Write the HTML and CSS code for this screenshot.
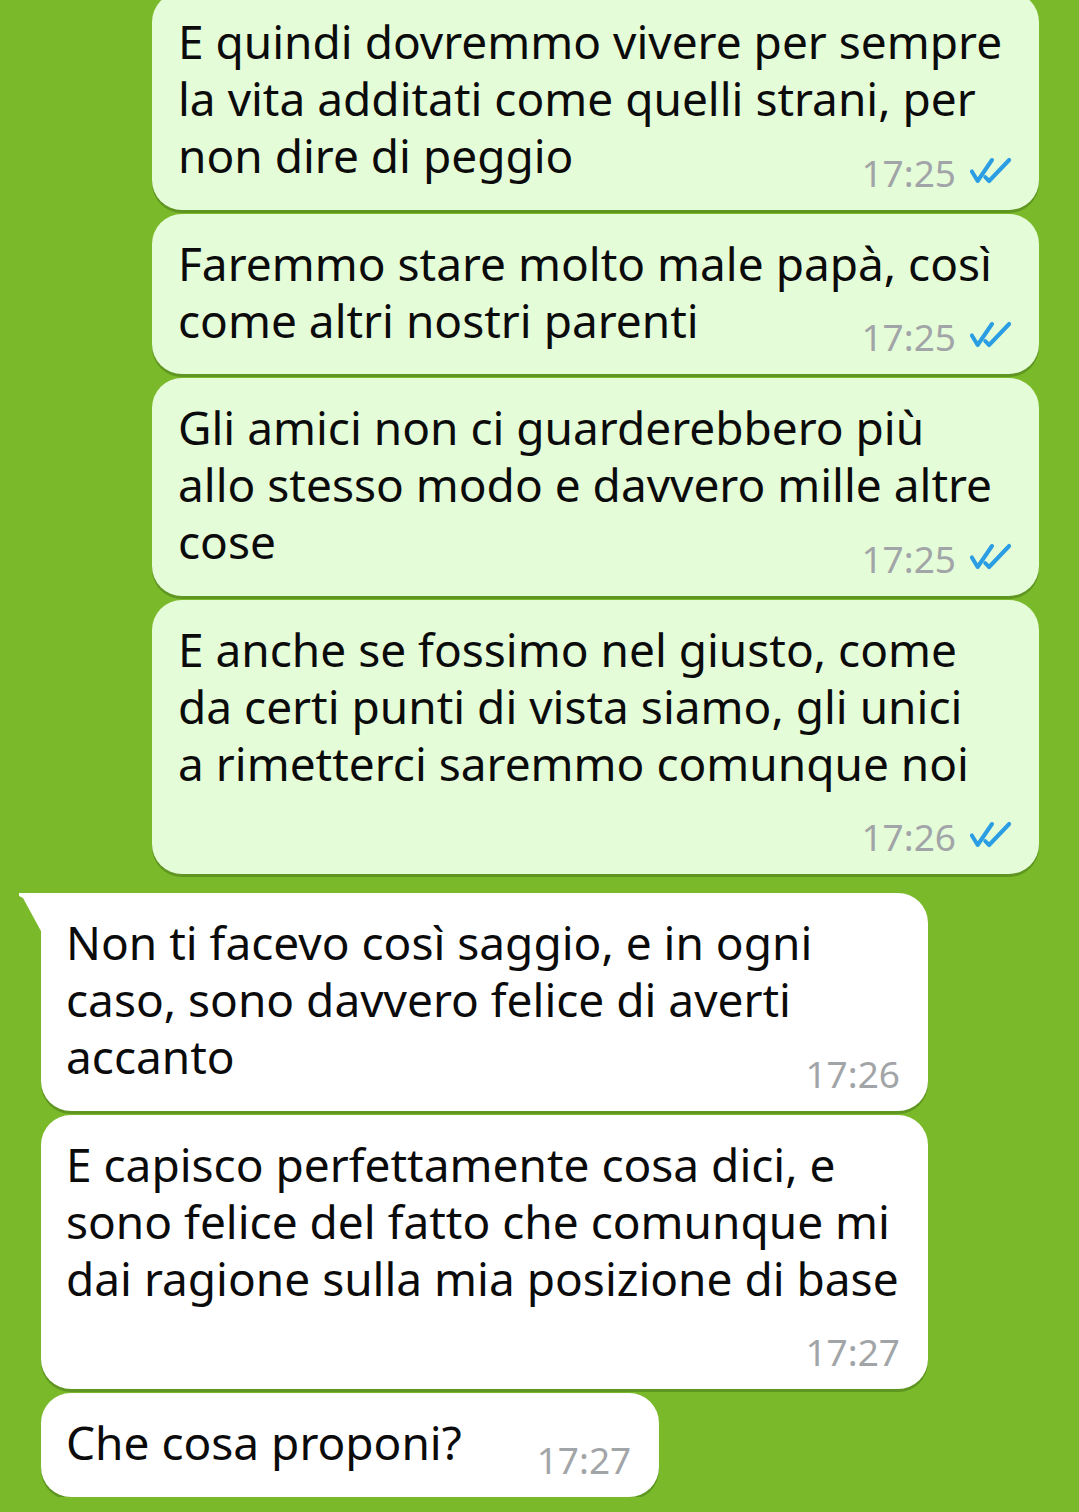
FILE: index.html
```html
<!DOCTYPE html>
<html lang="it">

<head>
  <meta charset="UTF-8">
  <meta name="viewport" content="width=device-width, initial-scale=1.0">
  <title>Chat</title>
  <link rel="stylesheet" href="styles.css">
</head>

<body>
  <div class="chat">

    <!-- Sent messages -->
    <div class="msg out first">
      <div class="text">E quindi dovremmo vivere per sempre<br>la vita additati come quelli strani, per<br>non dire di peggio</div>
      <div class="meta inline"><span class="time">17:25</span><svg class="ticks" viewBox="0 0 44 28"><path d="M2 15 L8 25 L23 3"/><path d="M16 21 L20 25 L41 3"/></svg></div>
    </div>

    <div class="msg out">
      <div class="text">Faremmo stare molto male papà, così<br>come altri nostri parenti</div>
      <div class="meta inline"><span class="time">17:25</span><svg class="ticks" viewBox="0 0 44 28"><path d="M2 15 L8 25 L23 3"/><path d="M16 21 L20 25 L41 3"/></svg></div>
    </div>

    <div class="msg out">
      <div class="text">Gli amici non ci guarderebbero più<br>allo stesso modo e davvero mille altre<br>cose</div>
      <div class="meta inline"><span class="time">17:25</span><svg class="ticks" viewBox="0 0 44 28"><path d="M2 15 L8 25 L23 3"/><path d="M16 21 L20 25 L41 3"/></svg></div>
    </div>

    <div class="msg out">
      <div class="text">E anche se fossimo nel giusto, come<br>da certi punti di vista siamo, gli unici<br>a rimetterci saremmo comunque noi</div>
      <div class="meta"><span class="time">17:26</span><svg class="ticks" viewBox="0 0 44 28"><path d="M2 15 L8 25 L23 3"/><path d="M16 21 L20 25 L41 3"/></svg></div>
    </div>

    <!-- Received messages -->
    <div class="msg in tail">
      <div class="text">Non ti facevo così saggio, e in ogni<br>caso, sono davvero felice di averti<br>accanto</div>
      <div class="meta inline"><span class="time">17:26</span></div>
    </div>

    <div class="msg in">
      <div class="text">E capisco perfettamente cosa dici, e<br>sono felice del fatto che comunque mi<br>dai ragione sulla mia posizione di base</div>
      <div class="meta"><span class="time">17:27</span></div>
    </div>

    <div class="msg in short">
      <div class="text">Che cosa proponi?</div>
      <div class="meta"><span class="time">17:27</span></div>
    </div>

  </div>
</body>

</html>
```

FILE: styles.css
```css
body {
  margin: 0;
  background: #7aba2a;
  font-family: 'Noto Sans', Lato, sans-serif;
  font-variant-ligatures: none;
  color: #0b0b0b;
}

.chat {
  display: flex;
  flex-direction: column;
  gap: 4px;
  margin-top: -8px;
}

.msg {
  position: relative;
  box-sizing: border-box;
  width: 887px;
  padding: 21px 27px 17px 26px;
  border-radius: 30px;
  box-shadow: 0 3px 0 #5f9622;
  display: flex;
  flex-direction: column;
}

.msg.out {
  align-self: flex-end;
  margin-right: 40px;
  background: #e5fcd9;
}

.msg.in {
  align-self: flex-start;
  margin-left: 41px;
  background: #ffffff;
  padding-left: 25px;
  padding-right: 28px;
}

.msg.in.tail {
  margin-top: 15px;
  border-top-left-radius: 0;
}

.msg.tail::before {
  content: "";
  position: absolute;
  left: -22px;
  top: 0;
  width: 23px;
  height: 40px;
  background: #ffffff;
  clip-path: polygon(0 0, 100% 0, 100% 100%, 4px 5px, 0 3px);
}

.text {
  font-size: 46px;
  line-height: 57px;
  white-space: nowrap;
}

.meta {
  display: flex;
  justify-content: flex-end;
  align-items: center;
  height: 40.5px;
  margin-top: 25px;
}

.meta.inline {
  margin-top: -32px;
}

.time {
  font-size: 37px;
  color: #a2a5a7;
}

.ticks {
  width: 42px;
  height: 27px;
  margin-left: 14px;
  margin-bottom: 4px;
  fill: none;
  stroke: #2a9de3;
  stroke-width: 4.2;
  stroke-linecap: round;
  stroke-linejoin: round;
}

.msg.short {
  width: auto;
  flex-direction: row;
}

.msg.short .meta {
  margin-left: 75px;
}
```
